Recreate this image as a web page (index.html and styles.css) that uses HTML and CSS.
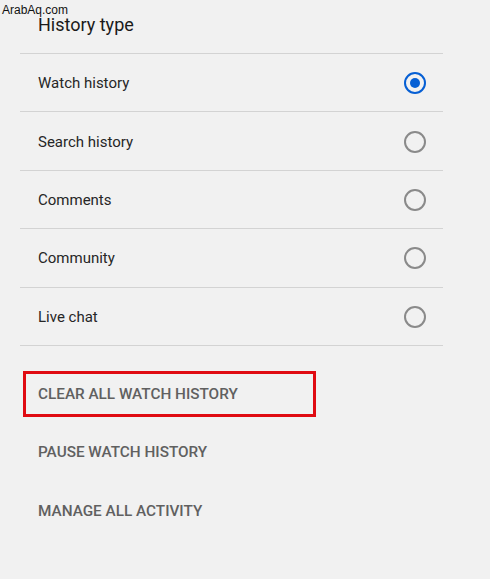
FILE: index.html
```html
<!DOCTYPE html>
<html>
<head>
  <title>History type</title>
  <link rel="stylesheet" href="styles.css">
</head>
<body>
  <div class="watermark">ArabAq.com</div>

  <main class="panel">
    <h2 class="panel-title">History type</h2>

    <ul class="type-list">
      <li class="type-row">
        <span>Watch history</span>
        <span class="radio checked"></span>
      </li>
      <li class="type-row">
        <span>Search history</span>
        <span class="radio"></span>
      </li>
      <li class="type-row">
        <span>Comments</span>
        <span class="radio"></span>
      </li>
      <li class="type-row">
        <span>Community</span>
        <span class="radio"></span>
      </li>
      <li class="type-row">
        <span>Live chat</span>
        <span class="radio"></span>
      </li>
    </ul>

    <div class="actions">
      <a href="#" class="action highlighted">Clear all watch history</a>
      <a href="#" class="action">Pause watch history</a>
      <a href="#" class="action">Manage all activity</a>
    </div>
  </main>
</body>
</html>
```

FILE: styles.css
```css
body {
  margin: 0;
  background-color: #f1f1f1;
  font-family: Roboto, 'Liberation Sans', sans-serif;
  color: #212121;
  height: 579px;
  overflow: hidden;
}

.watermark {
  position: absolute;
  top: 3px;
  left: 2px;
  font-family: 'Liberation Sans', Arial, sans-serif;
  font-size: 12px;
  color: #111;
}

.panel {
  margin-left: 20px;
  width: 423px;
}

.panel-title {
  margin: 0;
  height: 54px;
  padding: 0 0 4px 18px;
  display: flex;
  align-items: center;
  font-size: 18px;
  font-weight: 400;
  color: #1a1a1a;
  border-bottom: 1px solid #d3d3d3;
  box-sizing: border-box;
}

.type-list {
  list-style: none;
  margin: 0;
  padding: 0;
}

.type-row {
  height: 58.4px;
  box-sizing: border-box;
  padding: 1px 17px 0 18px;
  display: flex;
  align-items: center;
  justify-content: space-between;
  font-size: 15px;
  color: #262626;
  border-bottom: 1px solid #d3d3d3;
}

.radio {
  width: 22px;
  height: 22px;
  box-sizing: border-box;
  border: 2px solid #8a8a8a;
  border-radius: 50%;
  display: flex;
  align-items: center;
  justify-content: center;
}

.radio.checked {
  border-color: #065fd4;
}

.radio.checked::after {
  content: '';
  width: 10px;
  height: 10px;
  border-radius: 50%;
  background: #065fd4;
}

.actions {
  display: flex;
  flex-direction: column;
  align-items: flex-start;
  padding-top: 25px;
}

.action {
  display: block;
  width: 293px;
  height: 46px;
  box-sizing: border-box;
  margin-left: 3px;
  padding-left: 12px;
  line-height: 40px;
  margin-bottom: 12.5px;
  border: 3px solid transparent;
  text-decoration: none;
  text-transform: uppercase;
  font-size: 15.3px;
  font-weight: 500;
  color: #606060;
}

.action.highlighted {
  border-color: #e00b12;
}
```
